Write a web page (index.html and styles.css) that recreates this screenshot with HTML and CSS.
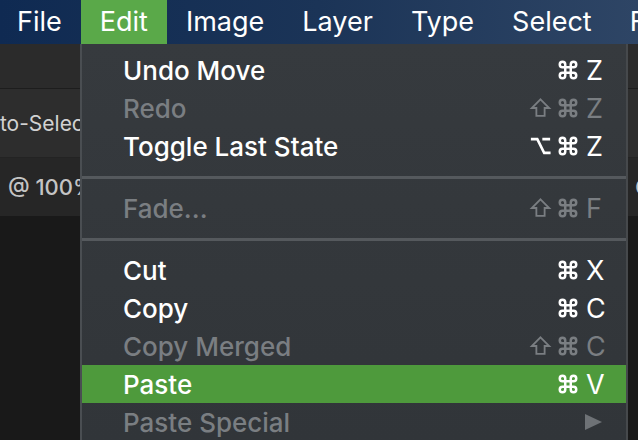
FILE: index.html
```html
<!DOCTYPE html>
<html lang="en">
<head>
  <meta charset="UTF-8">
  <meta name="viewport" content="width=device-width, initial-scale=1.0">
  <title>Edit menu</title>
  <link rel="stylesheet" href="styles.css">
</head>
<body>
  <div class="menubar">
    <span class="menubar-item">File</span>
    <span class="menubar-item active">Edit</span>
    <span class="menubar-item">Image</span>
    <span class="menubar-item">Layer</span>
    <span class="menubar-item">Type</span>
    <span class="menubar-item">Select</span>
    <span class="menubar-item">Filter</span>
  </div>

  <div class="workspace">
    <div class="toolbar-top"></div>
    <div class="options-bar"><span class="auto-select">Auto-Select</span></div>
    <div class="doc-tabs"><span class="doc-title">@ 100% (RGB/8)</span><span class="doc-next">C</span></div>
    <div class="canvas"></div>

    <!-- Edit dropdown -->
    <div class="menu">
      <div class="item"><span>Undo Move</span>
        <span class="keys">
          <svg class="mod" viewBox="0 0 24 24"><path d="M15 6v12a3 3 0 1 0 3-3H6a3 3 0 1 0 3 3V6a3 3 0 1 0-3 3h12a3 3 0 1 0-3-3"/></svg>
          <span class="key">Z</span>
        </span>
      </div>
      <div class="item disabled"><span>Redo</span>
        <span class="keys">
          <svg class="mod shift" viewBox="0 0 24 24"><path d="M12 2.5 21.5 12H16.5v8.5h-9V12H2.5z"/></svg>
          <svg class="mod" viewBox="0 0 24 24"><path d="M15 6v12a3 3 0 1 0 3-3H6a3 3 0 1 0 3 3V6a3 3 0 1 0-3 3h12a3 3 0 1 0-3-3"/></svg>
          <span class="key">Z</span>
        </span>
      </div>
      <div class="item"><span>Toggle Last State</span>
        <span class="keys">
          <svg class="mod opt" viewBox="0 0 24 24"><path d="M1.5 4.5h7l7.5 15h7M14 4.5h8.5"/></svg>
          <svg class="mod" viewBox="0 0 24 24"><path d="M15 6v12a3 3 0 1 0 3-3H6a3 3 0 1 0 3 3V6a3 3 0 1 0-3 3h12a3 3 0 1 0-3-3"/></svg>
          <span class="key">Z</span>
        </span>
      </div>
      <div class="sep"></div>
      <div class="item disabled"><span>Fade...</span>
        <span class="keys">
          <svg class="mod shift" viewBox="0 0 24 24"><path d="M12 2.5 21.5 12H16.5v8.5h-9V12H2.5z"/></svg>
          <svg class="mod" viewBox="0 0 24 24"><path d="M15 6v12a3 3 0 1 0 3-3H6a3 3 0 1 0 3 3V6a3 3 0 1 0-3 3h12a3 3 0 1 0-3-3"/></svg>
          <span class="key">F</span>
        </span>
      </div>
      <div class="sep"></div>
      <div class="item"><span>Cut</span>
        <span class="keys">
          <svg class="mod" viewBox="0 0 24 24"><path d="M15 6v12a3 3 0 1 0 3-3H6a3 3 0 1 0 3 3V6a3 3 0 1 0-3 3h12a3 3 0 1 0-3-3"/></svg>
          <span class="key">X</span>
        </span>
      </div>
      <div class="item"><span>Copy</span>
        <span class="keys">
          <svg class="mod" viewBox="0 0 24 24"><path d="M15 6v12a3 3 0 1 0 3-3H6a3 3 0 1 0 3 3V6a3 3 0 1 0-3 3h12a3 3 0 1 0-3-3"/></svg>
          <span class="key">C</span>
        </span>
      </div>
      <div class="item disabled"><span>Copy Merged</span>
        <span class="keys">
          <svg class="mod shift" viewBox="0 0 24 24"><path d="M12 2.5 21.5 12H16.5v8.5h-9V12H2.5z"/></svg>
          <svg class="mod" viewBox="0 0 24 24"><path d="M15 6v12a3 3 0 1 0 3-3H6a3 3 0 1 0 3 3V6a3 3 0 1 0-3 3h12a3 3 0 1 0-3-3"/></svg>
          <span class="key">C</span>
        </span>
      </div>
      <div class="item selected"><span>Paste</span>
        <span class="keys">
          <svg class="mod" viewBox="0 0 24 24"><path d="M15 6v12a3 3 0 1 0 3-3H6a3 3 0 1 0 3 3V6a3 3 0 1 0-3 3h12a3 3 0 1 0-3-3"/></svg>
          <span class="key">V</span>
        </span>
      </div>
      <div class="item disabled"><span>Paste Special</span>
        <span class="keys">
          <svg class="submenu" viewBox="0 0 18 16"><path d="M1 0 18 8 1 16z"/></svg>
        </span>
      </div>
    </div>
  </div>
</body>
</html>
```

FILE: styles.css
```css
html, body {
  margin: 0;
  height: 100%;
  overflow: hidden;
}
body {
  font-family: Inter, "Liberation Sans", sans-serif;
  background: #191919;
  color: #ffffff;
}
.menubar {
  height: 44px;
  display: flex;
  background: linear-gradient(90deg, #0f2a52 0%, #1b3457 50%, #2e4565 100%);
  white-space: nowrap;
  overflow: hidden;
}
.menubar-item {
  font-size: 27px;
  line-height: 44px;
  padding: 0 19px;
  color: #ffffff;
}
.menubar-item:first-child {
  padding-left: 17px;
  padding-right: 19px;
}
.menubar-item.active {
  background: #5aa949;
}
.workspace {
  position: relative;
  height: 396px;
}
.toolbar-top {
  height: 44px;
  background: #2b2b2b;
  border-bottom: 1px solid #1d1d1d;
}
.options-bar {
  height: 68px;
  background: #2d2d2d;
  border-bottom: 1px solid #232323;
  display: flex;
  align-items: center;
  overflow: hidden;
  white-space: nowrap;
}
.auto-select {
  font-size: 21px;
  color: #d2d2d2;
  margin-left: -27px;
}
.doc-tabs {
  height: 58px;
  background: #262626;
  display: flex;
  align-items: center;
  justify-content: space-between;
  overflow: hidden;
  white-space: nowrap;
}
.doc-title {
  font-size: 22px;
  font-weight: 500;
  color: #c4c4c4;
  padding-left: 8px;
}
.doc-next {
  font-size: 22px;
  color: #c4c4c4;
  margin-right: -13px;
}
.canvas {
  height: 225px;
  background: #191919;
}
.menu {
  position: absolute;
  left: 80px;
  top: 0;
  width: 544px;
  bottom: 0;
  padding-top: 7px;
  background: linear-gradient(180deg, #363a3e 0%, #313539 100%);
  border-left: 2px solid #4a4e52;
  border-right: 2px solid #46494c;
}
.item {
  height: 38px;
  display: flex;
  align-items: center;
  justify-content: space-between;
  padding: 0 20px 0 41px;
  font-size: 26px;
  font-weight: 500;
  color: #ffffff;
}
.item.disabled {
  color: #7a7e82;
}
.item.selected {
  background: #4e9a3c;
}
.keys {
  display: flex;
  align-items: center;
  gap: 5px;
}
.mod {
  width: 22px;
  height: 22px;
  fill: none;
  stroke: currentColor;
  stroke-width: 2.7;
}
.mod.shift,
.mod.opt {
  width: 23px;
  stroke-width: 2;
}
.mod.opt {
  stroke-width: 2.8;
}
.key {
  width: 20px;
  margin-left: 2px;
  font-size: 27px;
  font-weight: 400;
}
.submenu {
  width: 18px;
  height: 16px;
  margin-right: 4px;
  fill: #6e7276;
}
.sep {
  height: 24px;
  display: flex;
  align-items: center;
}
.sep::after {
  content: "";
  display: block;
  width: 100%;
  height: 3px;
  background: #55595d;
}
```
